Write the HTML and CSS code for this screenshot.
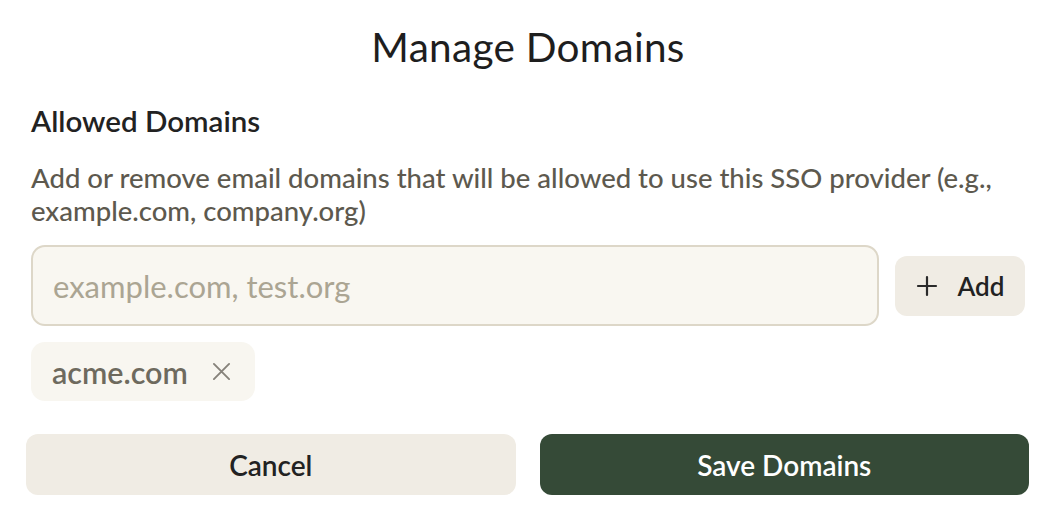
FILE: index.html
```html
<!DOCTYPE html>
<html lang="en">
<head>
<meta charset="utf-8">
<title>Manage Domains</title>
<link rel="stylesheet" href="styles.css">
</head>
<body>
<div class="dialog">
  <h1 class="title">Manage Domains</h1>
  <section class="section">
    <h2 class="label">Allowed Domains</h2>
    <p class="desc">Add or remove email domains that will be allowed to use this SSO provider (e.g., example.com, company.org)</p>
    <div class="input-row">
      <div class="input"><span class="placeholder">example.com, test.org</span></div>
      <button class="add-btn">
        <svg class="plus" width="22" height="22" viewBox="0 0 22 22"><path d="M11 2v18M2 11h18" stroke="#2a2a2a" stroke-width="2.2" stroke-linecap="round" fill="none"/></svg>
        <span>Add</span>
      </button>
    </div>
    <div class="chips">
      <div class="chip"><span>acme.com</span>
        <svg class="x" width="20" height="20" viewBox="0 0 20 20"><path d="M2 2l16 16M18 2L2 18" stroke="#86827a" stroke-width="2" stroke-linecap="round" fill="none"/></svg>
      </div>
    </div>
  </section>
  <div class="footer">
    <button class="btn cancel">Cancel</button>
    <button class="btn save">Save Domains</button>
  </div>
</div>
</body>
</html>
```
FILE: styles.css
```css
* { box-sizing: border-box; }
html, body { margin: 0; padding: 0; background: #ffffff; }
body { font-family: "Lato", "Noto Sans", sans-serif; color: #222; }
.dialog { width: 1054px; padding: 0 29px 0 31px; }
.title { margin: 0; padding-top: 24px; font-size: 40.5px; line-height: 46px; font-weight: 400; text-align: center; color: #1e1e1e; letter-spacing: 0.3px; }
.section { margin-top: 34px; }
.label { margin: 0; font-size: 29.5px; line-height: 34px; font-weight: 600; color: #222; }
.desc { margin: 23px 0 0; font-size: 27.5px; line-height: 33px; font-weight: 500; color: #5d594e; }
.input-row { display: flex; align-items: center; gap: 16px; margin-top: 18px; }
.input { flex: 1; height: 81px; border: 2px solid #ddd7c8; border-radius: 14px; background: #f9f7f1; display: flex; align-items: center; padding: 0 20px; }
.placeholder { font-size: 31px; color: #aba593; }
.add-btn { height: 60px; width: 130px; border: none; border-radius: 12px; background: #f0ece4; display: flex; align-items: center; justify-content: center; gap: 20px; font-family: inherit; font-size: 26px; font-weight: 600; color: #222; padding: 0 18px; }
.chips { display: flex; margin-top: 16px; }
.chip { height: 59px; width: 224px; background: #f8f6f0; border-radius: 14px; display: flex; align-items: center; gap: 24px; padding: 0 21px; font-size: 30.5px; font-weight: 600; color: #6e6a5e; }
.x { width: 19px; height: 19px; }
.footer { display: flex; gap: 24px; margin: 33px -4px 0 -5px; }
.btn { flex: 1; height: 61px; border: none; border-radius: 12px; font-family: inherit; font-size: 28px; font-weight: 600; }
.cancel { background: #f0ece4; color: #222; }
.save { background: #354a37; color: #ffffff; }
```
